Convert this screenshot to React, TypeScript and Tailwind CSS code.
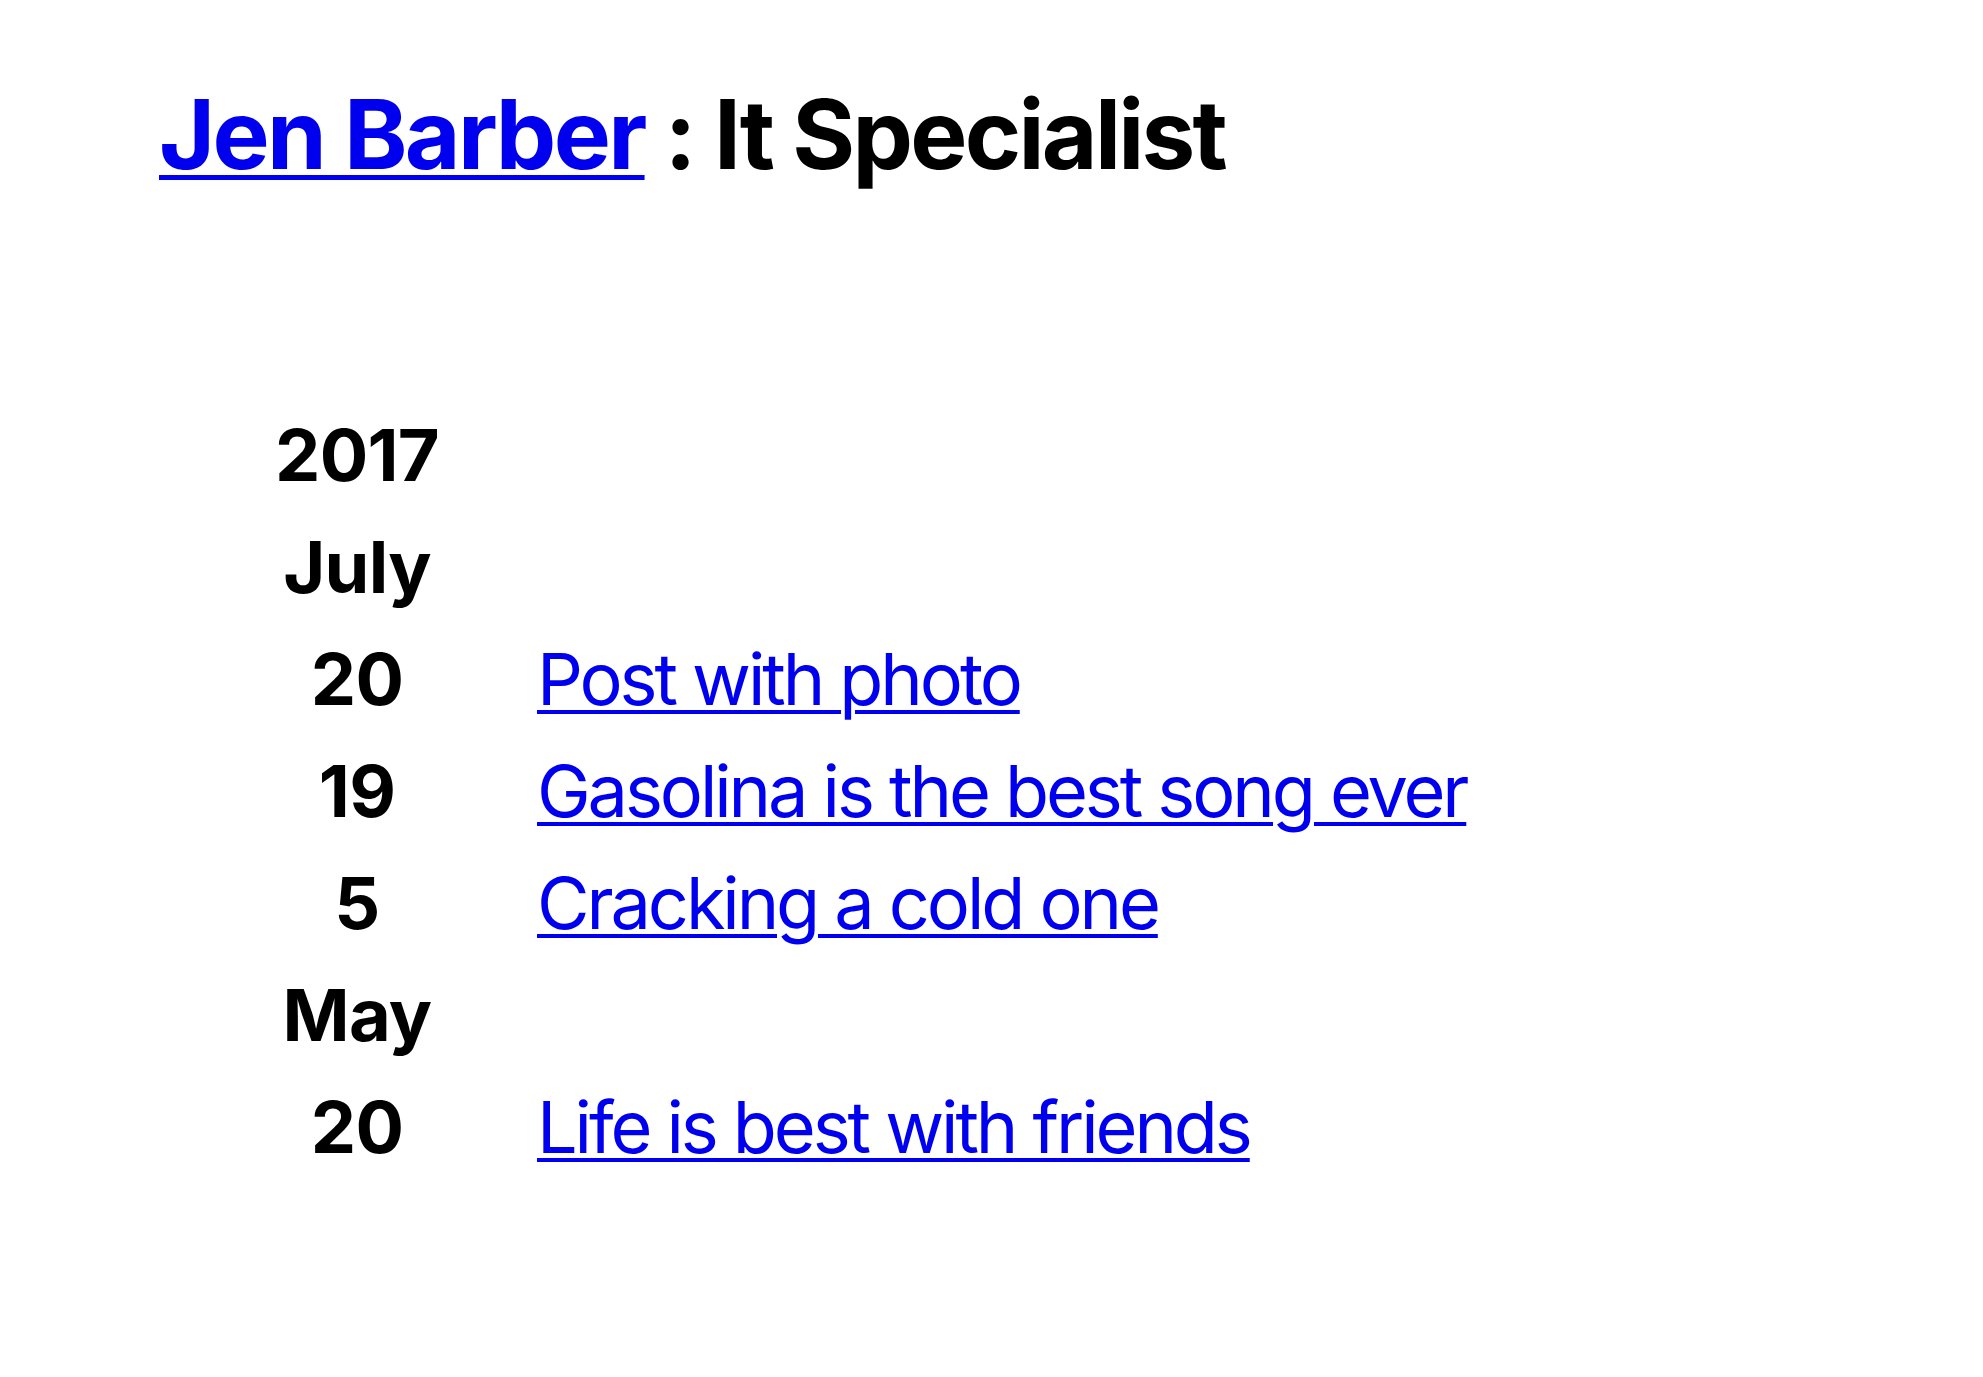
import React from "react";

type Row = { label: string; title?: string };

const rows: Row[] = [
  { label: "2017" },
  { label: "July" },
  { label: "20", title: "Post with photo" },
  { label: "19", title: "Gasolina is the best song ever" },
  { label: "5", title: "Cracking a cold one" },
  { label: "May" },
  { label: "20", title: "Life is best with friends" },
];

export default function App() {
  return (
    <div className="min-h-screen bg-white text-black font-['Inter',sans-serif]">
      <div className="pl-[159px] pt-[86px]">
        {/* heading */}
        <h1 className="text-[96px] font-bold leading-none tracking-[-0.028em]">
          <a href="#" className="text-[#0000ee] underline underline-offset-[6px] decoration-[5px]">
            Jen Barber
          </a>{" "}
          : It Specialist
        </h1>

        {/* timeline */}
        <div className="mt-[217px] ml-[68px] grid grid-cols-[260px_1fr] text-[72px] leading-[112px]">
          {rows.map((row, i) => (
            <React.Fragment key={i}>
              <div className="text-center font-bold tracking-[-0.01em]">{row.label}</div>
              <div className="pl-[50px] tracking-[-0.043em]">
                {row.title && (
                  <a href="#" className="text-[#0000ee] underline underline-offset-[5px] decoration-[4px]">
                    {row.title}
                  </a>
                )}
              </div>
            </React.Fragment>
          ))}
        </div>
      </div>
    </div>
  );
}
